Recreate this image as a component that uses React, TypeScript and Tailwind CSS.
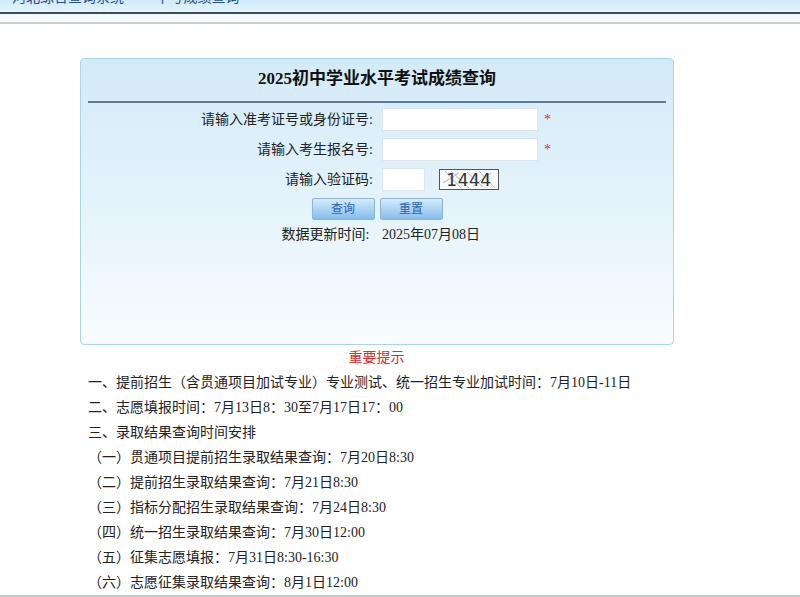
import React, { ReactElement } from 'react';

const FONT = { fontFamily: '"Liberation Serif", "Noto Sans CJK SC", serif' };

const tips: string[] = [
  '一、提前招生（含贯通项目加试专业）专业测试、统一招生专业加试时间：7月10日-11日',
  '二、志愿填报时间：7月13日8：30至7月17日17：00',
  '三、录取结果查询时间安排',
  '（一）贯通项目提前招生录取结果查询：7月20日8:30',
  '（二）提前招生录取结果查询：7月21日8:30',
  '（三）指标分配招生录取结果查询：7月24日8:30',
  '（四）统一招生录取结果查询：7月30日12:00',
  '（五）征集志愿填报：7月31日8:30-16:30',
  '（六）志愿征集录取结果查询：8月1日12:00',
];

const Captcha = (): ReactElement => (
  <svg width="60" height="21" viewBox="0 0 60 21" className="block">
    <rect x="0.5" y="0.5" width="59" height="20" fill="#fafafa" stroke="#555" />
    <path d="M6 2 L22 19 M12 2 L30 19 M28 3 L44 18 M40 2 L56 19 M4 14 L20 4 M34 17 L52 4" stroke="#b8b8b8" strokeWidth="1" />
    <text x="30" y="17" textAnchor="middle" fontSize="17" fontFamily="DejaVu Sans, sans-serif" fill="#333" letterSpacing="0.5">1444</text>
  </svg>
);

const Row = ({ label, children }: { label: string; children: React.ReactNode }): ReactElement => (
  <div className="flex items-center">
    <div className="w-[292px] text-right text-[14px] text-[#222] whitespace-pre">{label}</div>
    <div className="ml-[9px] flex items-center">{children}</div>
  </div>
);

const App = (): ReactElement => {
  return (
    <div className="w-[800px] h-[597px] overflow-hidden bg-white" style={FONT}>
      {/* top banner, mostly scrolled out */}
      <div className="h-[12px] overflow-hidden bg-gradient-to-b from-[#cfeaf8] to-[#e4f5fc]">
        <div className="-mt-[9px] pl-[12px] text-[14px] leading-[14px] text-[#2a4f86] whitespace-nowrap">
          河北综合查询系统　— 中考成绩查询
        </div>
      </div>
      <div className="h-[2px] bg-[#3f4e5e]" />
      <div className="h-[8px] bg-[#f6fbfd]" />
      <div className="h-[2px] bg-[#c9d0d3]" />

      <div className="pt-[34px]">
        <div className="ml-[80px] w-[594px] h-[287px] rounded-[4px] border border-[#a9d6e6] bg-gradient-to-b from-[#d3eaf8] via-[#e4f3fb] to-[#f8fcfe]">
          <div className="pt-[8px] text-center text-[17px] leading-[24px] font-bold text-[#111]">
            2025初中学业水平考试成绩查询
          </div>
          <div className="mx-[7px] mt-[10px] h-[2px] bg-[#5f7b8c]" />

          <div className="mt-[5px] flex flex-col gap-[7px]">
            <Row label="请输入准考证号或身份证号:">
              <div className="w-[156px] h-[23px] bg-white border border-[#dbe6ec]" />
              <span className="ml-[6px] text-[14px] text-[#e03030]">*</span>
            </Row>
            <Row label="请输入考生报名号:">
              <div className="w-[156px] h-[23px] bg-white border border-[#dbe6ec]" />
              <span className="ml-[6px] text-[14px] text-[#e03030]">*</span>
            </Row>
            <Row label="请输入验证码:">
              <div className="w-[43px] h-[23px] bg-white border border-[#dbe6ec]" />
              <div className="ml-[14px]">
                <Captcha />
              </div>
            </Row>
          </div>

          <div className="mt-[7px] flex justify-center gap-[5px]">
            <div className="w-[63px] h-[22px] rounded-[2px] border border-[#8db5d8] bg-gradient-to-b from-[#d4ebfc] to-[#86bdec] flex items-center justify-center text-[12px] text-[#2b62aa]">
              查询
            </div>
            <div className="w-[63px] h-[22px] rounded-[2px] border border-[#8db5d8] bg-gradient-to-b from-[#d4ebfc] to-[#86bdec] flex items-center justify-center text-[12px] text-[#2b62aa]">
              重置
            </div>
          </div>

          <div className="mt-[4px]">
            <Row label="数据更新时间: ">
              <span className="text-[14px] text-[#222]">2025年07月08日</span>
            </Row>
          </div>
        </div>

        <div className="w-[753px] text-center text-[14px] leading-[25px] text-[#e02a2a]">重要提示</div>
        <div className="pl-[88px] text-[14px] leading-[25px] text-[#222]">
          {tips.map((t, i) => (
            <div key={i.toString()} className="whitespace-nowrap">{t}</div>
          ))}
        </div>
      </div>
      <div className="h-[2px] bg-[#c3cbcf]" />
    </div>
  );
};

export default App;
